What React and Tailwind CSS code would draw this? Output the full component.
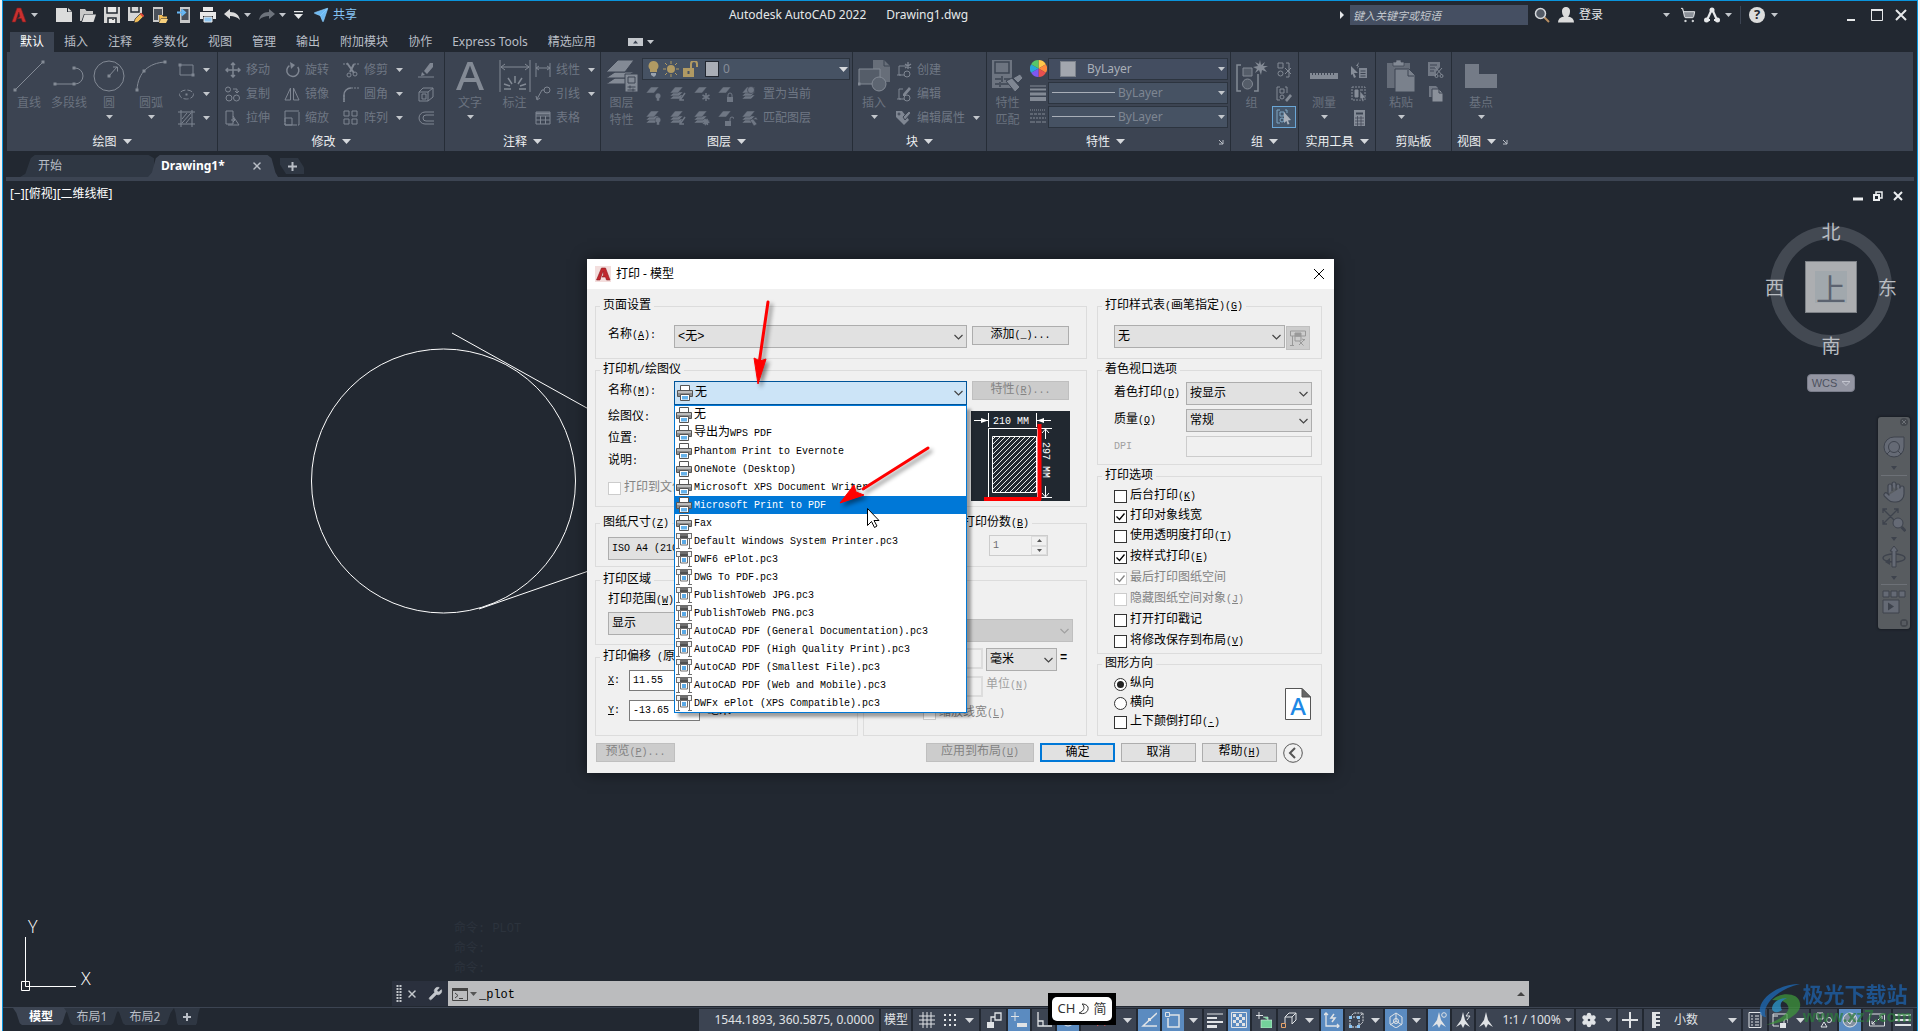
import { X, Wrench, Send, ShoppingCart, Settings, Hand } from "lucide-react";

const RIBBON_TABS = ["默认", "插入", "注释", "参数化", "视图", "管理", "输出", "附加模块", "协作", "Express Tools", "精选应用"];

const PRINTERS = [
  { name: "无" },
  { name: "导出为WPS PDF" },
  { name: "Phantom Print to Evernote" },
  { name: "OneNote (Desktop)" },
  { name: "Microsoft XPS Document Writer" },
  { name: "Microsoft Print to PDF", active: true },
  { name: "Fax" },
  { name: "Default Windows System Printer.pc3", plotter: true },
  { name: "DWF6 ePlot.pc3", plotter: true },
  { name: "DWG To PDF.pc3", plotter: true },
  { name: "PublishToWeb JPG.pc3", plotter: true },
  { name: "PublishToWeb PNG.pc3", plotter: true },
  { name: "AutoCAD PDF (General Documentation).pc3", plotter: true },
  { name: "AutoCAD PDF (High Quality Print).pc3", plotter: true },
  { name: "AutoCAD PDF (Smallest File).pc3", plotter: true },
  { name: "AutoCAD PDF (Web and Mobile).pc3", plotter: true },
  { name: "DWFx ePlot (XPS Compatible).pc3", plotter: true },
];

/* ---------- helpers ---------- */

function Svg({ w = 16, h = w, box, className = "", children }) {
  return (
    <svg
      width={w}
      height={h}
      viewBox={box || `0 0 ${w} ${h}`}
      fill="none"
      stroke="currentColor"
      className={`shrink-0 ${className}`}
      aria-hidden="true"
    >
      {children}
    </svg>
  );
}

function Caret({ className = "" }) {
  return (
    <Svg w={7} h={4} className={`text-[#c3c7cc] ${className}`}>
      <path d="M0 0h7L3.5 4z" fill="currentColor" stroke="none" />
    </Svg>
  );
}

function BigCaret({ className = "" }) {
  return (
    <Svg w={9} h={5} className={`text-[#d5d8dc] ${className}`}>
      <path d="M0 0h9L4.500 5z" fill="currentColor" stroke="none" />
    </Svg>
  );
}

// Latin runs are set smaller than the Chinese ones; "&X" underlines an access key
function T({ children }) {
  const parts = children.split(/(&.|[\u3000-\u9fff]+)/).filter(Boolean);
  return (
    <span className="whitespace-pre">
      {parts.map((p, i) => {
        if (p[0] === "&") return <u key={i} className="text-[10px] underline-offset-1">{p[1]}</u>;
        if (/[\u3000-\u9fff]/.test(p)) return <span key={i}>{p}</span>;
        return <span key={i} className="text-[10px]">{p}</span>;
      })}
    </span>
  );
}

/* ---------- title bar ---------- */

function TitleBar() {
  return (
    <header className="flex h-[31px] items-center pr-[10px] pb-[3px] pl-[8px] text-[12px] text-[#e6e8ea]">
      <button className="flex items-center gap-1" aria-label="应用程序菜单">
        <Svg w={16}>
          <path d="M1 15L6 1h4l5 14h-3.500l-1.200-3.500H6.500L9 9.500 7.800 5 4.500 15z" fill="#c9302f" stroke="#7d1c1f" strokeWidth=".6" />
        </Svg>
        <Caret />
      </button>

      <div className="ml-[18px] flex items-center gap-2">
        <button aria-label="新建"><Svg w={16}><path d="M0 1h11v4h5v10H0zM12 1l4 3.500h-4z" fill="#dcdcdc" stroke="none" /></Svg></button>
        <button aria-label="打开"><Svg w={16}><path d="M0 2h5l1.500 2H13v3H4l-2.500 7H0z" fill="#c9c9c9" stroke="none" /><path d="M4.500 7.500H16L13.500 15H2z" fill="#dcdcdc" stroke="none" /></Svg></button>
        <button aria-label="保存"><Svg w={16}><path d="M0 0h16v16H0z" fill="#d6d6d6" stroke="none" /><path d="M3 0v6h10V0M4 16v-5h8v5" stroke="#222831" strokeWidth="1.500" fill="#e9e9e9" /><path d="M8 12.500h2" stroke="#555" /></Svg></button>
        <button aria-label="另存为"><Svg w={16}><path d="M0 0h14v9l-5 5H0z" fill="#d6d6d6" stroke="none" /><path d="M3 0v5h8V0" stroke="#222831" strokeWidth="1.500" /><path d="M7 12l6-6 3 3-6 6-4 1z" fill="#f2bd58" stroke="#222831" strokeWidth=".7" /><path d="M12.500 6.500l3 3" stroke="#e04b3c" strokeWidth="2" /></Svg></button>
        <button aria-label="从移动设备打开"><Svg w={16}><path d="M1 0h10v8H7v7H1z" fill="#c9c9c9" stroke="none" /><path d="M2 2h8v6H6v5H2z" fill="#4a505a" stroke="none" /><path d="M7 8h3l1 1.500h4v2H9L7.500 15z" fill="#f2bd58" stroke="none" /><path d="M9 12h7l-2 4H7z" fill="#f7d07e" stroke="none" /></Svg></button>
        <button aria-label="保存到移动设备"><Svg w={16}><path d="M4 0h10v16H4z" fill="#c9c9c9" stroke="none" /><path d="M5.500 2h7v11h-7z" fill="#4a505a" stroke="none" /><path d="M1 5.500h7M5.500 2.500l3.500 3-3.500 3" stroke="#68b8f5" strokeWidth="2" /></Svg></button>
        <button aria-label="打印"><Svg w={16}><path d="M3 0h10v4H3zM0 5h16v7h-3V9H3v3H0z" fill="#e8e8e8" stroke="none" /><path d="M4 10h8v5H4z" fill="#8fc7f3" stroke="#e8e8e8" /></Svg></button>
        <button aria-label="放弃"><Svg w={16}><path d="M0 7l6-5v3c6 0 9 3 10 8-3-3-6-4-10-4v3z" fill="#dcdcdc" stroke="none" /></Svg></button>
        <Caret className="-ml-1" />
        <button aria-label="重做"><Svg w={16}><path d="M16 7l-6-5v3C4 5 1 8 0 13c3-3 6-4 10-4v3z" fill="#6d737c" stroke="none" /></Svg></button>
        <Caret className="-ml-1" />
        <button aria-label="自定义"><Svg w={9} h={8}><path d="M0 .5h9" strokeWidth="1.500" /><path d="M0 3h9L4.500 8z" fill="currentColor" stroke="none" /></Svg></button>
        <button className="flex items-center gap-1 pl-[2px] text-[#86c4f4]">
          <Send size={16} fill="#6db9f2" strokeWidth={1} className="text-[#8fd0ff]" />
          共享
        </button>
      </div>

      <p className="flex flex-1 justify-center gap-[20px] whitespace-nowrap">
        <span>Autodesk AutoCAD 2022</span>
        <span>Drawing1.dwg</span>
      </p>

      <div className="flex items-center">
        <Svg w={4} h={8} className="mr-[6px]"><path d="M0 0v8l4-4z" fill="currentColor" stroke="none" /></Svg>
        <input
          aria-label="搜索"
          placeholder="键入关键字或短语"
          className="h-5 w-[178px] bg-[#454f62] px-[3px] text-[11px] italic outline-none placeholder:text-[#c3c7cd]"
        />
        <button className="ml-[6px]" aria-label="查找"><Svg w={16}><path d="M10 10l5 5" stroke="#b98f62" strokeWidth="2" /><circle cx="6.500" cy="6.500" r="5" fill="#545b66" stroke="#d5d8dc" strokeWidth="1.500" /></Svg></button>
        <button className="ml-2 flex items-center gap-[5px]">
          <Svg w={16}><path d="M8 0a4 4 0 014 4.500C12 7 11 9 10 9.500c4 .5 6 2.500 6 6H0c0-3.500 2-5.500 6-6C5 9 4 7 4 4.500A4 4 0 018 0z" fill="#dcdcdc" stroke="none" /></Svg>
          登录
        </button>
        <Caret className="ml-[60px]" />
        <button className="ml-[10px]" aria-label="购物车"><ShoppingCart size={16} strokeWidth={1.500} fill="#8b9098" /></button>
        <button className="ml-2 flex items-center gap-[5px]" aria-label="Autodesk App Store">
          <Svg w={16}><path d="M8 2L3 13M8 2l5 11M3 13h3M10 13h3" strokeWidth="2.200" /><circle cx="8" cy="3" r="2.500" fill="currentColor" stroke="none" /><circle cx="2.500" cy="13" r="2.500" fill="currentColor" stroke="none" /><circle cx="13.500" cy="13" r="2.500" fill="currentColor" stroke="none" /></Svg>
          <Caret />
        </button>
        <span className="mx-[8px] h-[18px] w-px bg-[#3c4452]" />
        <button className="flex items-center gap-[6px]" aria-label="帮助">
          <span className="flex size-4 items-center justify-center rounded-full bg-[#dcdcdc] text-[13px] font-bold text-[#222831]">?</span>
          <Caret />
        </button>
        <button className="ml-[69px]" aria-label="最小化"><Svg w={8} h={12}><path d="M0 11h8" strokeWidth="2" /></Svg></button>
        <button className="ml-[16px]" aria-label="最大化"><Svg w={12}><path d="M.5 1h11v10.500H.5z" /><path d="M0 1h12" strokeWidth="2" /></Svg></button>
        <button className="ml-[12px]" aria-label="关闭"><Svg w={12}><path d="M1 1l10 10M11 1L1 11" strokeWidth="2" /></Svg></button>
      </div>
    </header>
  );
}

function RibbonTabs() {
  return (
    <nav className="flex h-[20px] items-center pl-[7px] text-[12px] text-[#b9bec6]">
      {RIBBON_TABS.map((t, i) => (
        <button
          key={t}
          className={
            i === 0
              ? "h-full bg-[#3c4452] px-[10px] leading-[20px] text-white"
              : "h-full px-[10px] leading-[20px] whitespace-nowrap"
          }
        >
          {t}
        </button>
      ))}
      <button className="ml-[22px] flex items-center gap-1" aria-label="最小化功能区">
        <Svg w={15} h={8}><path d="M0 0h15v8H0z" fill="#c3c7cc" stroke="none" /><path d="M5 5.500h5L7.500 2.500z" fill="#3c4452" stroke="none" /></Svg>
        <Caret />
      </button>
    </nav>
  );
}

/* ---------- ribbon ---------- */

function Panel({ title, width, caret = true, launcher = false, children }) {
  return (
    <section className={`flex shrink-0 flex-col border-r border-[#262d37] ${width}`}>
      <div className="flex h-[80px] pt-[6px]">{children}</div>
      <div className="flex flex-1 items-center justify-center gap-[6px] text-[12px] leading-[18px] text-[#eceef0]">
        {launcher && <span className="flex-1" />}
        {title}
        {caret && <BigCaret />}
        {launcher && (
          <span className="flex flex-1 justify-end pr-[6px]">
            <Svg w={6}><path d="M1 1l4 4M5 1v4H1" stroke="#b9bec6" /></Svg>
          </span>
        )}
      </div>
    </section>
  );
}

function Big({ icon, label, label2, caret, width = "w-[41px]" }) {
  return (
    <button className={`flex shrink-0 flex-col items-center ${width}`}>
      <span className="flex h-[36px] items-center">{icon}</span>
      <span className="text-[12px] leading-[17px] whitespace-nowrap text-[#6a727f]">{label}</span>
      {label2 && <span className="text-[12px] leading-[17px] text-[#6a727f]">{label2}</span>}
      {caret && <Caret className="mt-1" />}
    </button>
  );
}

function Small({ icon, label, caret }) {
  return (
    <button className="flex h-6 items-center gap-[5px] text-[12px] whitespace-nowrap text-[#6f7784]">
      <span className="flex w-[17px] justify-center text-[#7f8692]">{icon}</span>
      {label}
      {caret && <Caret className="ml-[3px]" />}
    </button>
  );
}

const dot = (x, y) => <path key={`${x}-${y}`} d={`M${x - 1.5} ${y - 1.5}h3v3h-3z`} fill="currentColor" stroke="none" />;

const BIG = {
  line: <Svg w={32}><path d="M2 30L30 2" />{dot(2, 30)}{dot(30, 2)}</Svg>,
  pline: <Svg w={32}><path d="M2 24h20a8 8 0 000-16h-1" />{dot(2, 24)}{dot(21, 24)}{dot(21, 8)}</Svg>,
  circle: <Svg w={32}><circle cx="16" cy="16" r="15" /><path d="M16 16l8-9M20 7h4.500v4.500" />{dot(16, 16)}</Svg>,
  arc: <Svg w={32}><path d="M2 30C3 12 14 3 30 2" />{dot(2, 30)}{dot(9, 11)}{dot(30, 2)}</Svg>,
  text: <Svg w={28} h={30}><path d="M0 29L11.500 1h5L28 29h-4.800l-3-8H7.800l-3 8zM9.300 17h9.400L14 4.500z" fill="currentColor" stroke="none" /></Svg>,
  dim: <Svg w={32}><path d="M1 0v32M31 0v32M2 7h28M6 4L2 7l4 3M26 4l4 3-4 3" /><path d="M16 16v7M9 18l4 6M23 18l-4 6M5 24l6 2M27 24l-6 2M5 29h7M27 29h-7" strokeWidth="1.500" /></Svg>,
  layers: (
    <Svg w={32}>
      <g fill="currentColor" stroke="#3c4452" strokeWidth="1">
        <path d="M9 18h19l-9 6H0z" /><path d="M9 12h19l-9 6H0z" /><path d="M12 0h16l-9 12H0z" />
        <path d="M19 14h13v18H19z" />
      </g>
      <path d="M22 17h7v6h-7zM21.500 27h8M21.500 30h8M24 25.500v3M27 28.500v3" stroke="#3c4452" />
    </Svg>
  ),
  insert: <Svg w={32}><path d="M15 0h11l6 6v16H15z" fill="#676e79" stroke="none" /><path d="M26 0v6h6" stroke="#3c4452" /><path d="M1 9h21v15H1z" fill="#555d69" /><circle cx="21" cy="24" r="7" fill="#5d6571" />{dot(1, 24)}</Svg>,
  match: <Svg w={32}><path d="M0 0h20v28H0z" fill="#6d7480" stroke="none" /><path d="M3 2h14v11H3zM3 19h6M12 19h6M3 24h4M9 24h9M10 16v6M8 22v5" stroke="#3c4452" strokeWidth="1.500" /><path d="M14 21l6-3 8 9-5 5zM21 18l7-4 3 4-5 5z" fill="#7f8692" stroke="#3c4452" /></Svg>,
  group: <Svg w={32}><path d="M5 5H1v26h4M18 31h4V14" strokeWidth="1.500" /><path d="M7 8h9v8H7z" fill="#555d69" /><circle cx="11.500" cy="24" r="5" fill="#555d69" /><path d="M24 0l1 5 4-3-2 4h5l-4 2 3 4-5-2-1 5-2-5-4 3 2-4-4-2 5-1-3-4 4 2z" fill="currentColor" stroke="none" /></Svg>,
  ruler: <Svg w={30} h={32}><path d="M1 13h28v6H1z" fill="currentColor" stroke="none" /><path d="M3.500 12v3M6.500 12v3M9.500 12v3M12.500 12v3M15.500 12v3M18.500 12v3M21.500 12v3M24.500 12v3" stroke="#3c4452" /></Svg>,
  paste: <Svg w={28} h={32}><path d="M0 3h23v25H0z" fill="#666d79" stroke="none" /><path d="M6 2h3V0h5v2h3v4H6z" fill="currentColor" stroke="#3c4452" strokeWidth=".7" /><path d="M8 9h14l6 6v17H8z" fill="#7a818c" stroke="#3c4452" /><path d="M21 10v6h6" stroke="#3c4452" /></Svg>,
  base: <Svg w={34} h={32}><path d="M1 4h14v10h18v14H1z" fill="#747b87" stroke="none" /></Svg>,
};

const SM = {
  rect: <Svg w={17}><path d="M2 3h13v10H2z" />{dot(2, 3)}{dot(15, 13)}</Svg>,
  ellipse: <Svg w={17}><ellipse cx="8.500" cy="8.500" rx="7" ry="4.500" strokeDasharray="5 2" /><path d="M7.500 7.500h2v2h-2z" fill="currentColor" stroke="none" /></Svg>,
  hatch: <Svg w={17}><path d="M3 0v17M14 0v17M0 2h17M0 14h17" /><path d="M4 9l5-6M4 13l9-10M8 13l5-6" /></Svg>,
  move: <Svg><path d="M8 1v14M1 8h14M6 3l2-2 2 2M6 13l2 2 2-2M3 6L1 8l2 2M13 6l2 2-2 2" strokeWidth="1.500" /></Svg>,
  rotate: <Svg><path d="M9 3a6 6 0 106 6" strokeWidth="1.500" transform="rotate(-35 8 9)" /><path d="M6 0l5 3-4 4z" fill="currentColor" stroke="none" /></Svg>,
  trim: <Svg><path d="M0 2h5M11 2h5" strokeDasharray="2 1" /><path d="M4 1l7 10M11 2L7 10" strokeWidth="2" /><circle cx="6" cy="13" r="2" /><circle cx="12" cy="12" r="2" /></Svg>,
  erase: <Svg><path d="M12 1h3v4l-6 7-3-3zM4 10l3 3-4 1z" fill="currentColor" stroke="none" /><path d="M0 15h16" /></Svg>,
  copy: <Svg><circle cx="3" cy="3.500" r="2.500" /><circle cx="4" cy="12" r="3" /><circle cx="11.500" cy="12" r="3" /><path d="M8 3h4v4M10 5l2 2 2-2" /></Svg>,
  mirror: <Svg><path d="M6.500 2v12H1zM9.500 2v12H15z" /></Svg>,
  fillet: <Svg><path d="M1 16V9a7 7 0 017-7" strokeWidth="1.500" /><path d="M8 2h8M1 9v7" strokeDasharray="2 1" /></Svg>,
  explode: <Svg><path d="M1 6h9v9H1zM1 6l4-4h10l-5 4M10 15l5-4V2" /><path d="M4 8h4v5H4z" /></Svg>,
  stretch: <Svg><path d="M1 1h7v13H1zM8 6l6 9H3M6 10h4M8 8l2 2-2 2" /></Svg>,
  scale: <Svg><path d="M1 1h14v14H1z" strokeDasharray="14 1" /><path d="M1 8h7v7H1z" /></Svg>,
  array: <Svg><path d="M1 1h5v5H1zM9 1h5v5H9zM1 9h5v5H1zM9 9h5v5H9z" /></Svg>,
  offset: <Svg><path d="M16 2H7a6 6 0 000 12h9M16 5H8a3 3 0 000 6h8" /></Svg>,
  linear: <Svg><path d="M1 1v14M15 1v14M1 6h14M4 4L1 6l3 2M12 4l3 2-3 2" /></Svg>,
  leader: <Svg><circle cx="12" cy="4" r="3" /><path d="M9 4H7L2 13M1 10l1 4 3-2" /></Svg>,
  table: <Svg><path d="M1 2h14v12H1zM1 6h14M1 10h14M5.500 6v8M10.500 6v8" /><path d="M1 3.500h14" strokeWidth="2" /></Svg>,
  create: <Svg><path d="M3 4h8M3 4v9h5M1 13h4" /><circle cx="11" cy="12" r="3" /><path d="M12 0v7M9 2l6 4M15 2L9 6" strokeWidth="1.300" /></Svg>,
  edit: <Svg><path d="M3 3h4M3 3v10h5M1 13h4" /><circle cx="11" cy="12" r="3" /><path d="M7 8l6-7 2 2-6 7H7z" fill="currentColor" stroke="none" /></Svg>,
  attr: <Svg><path d="M0 1h6l7 9-5 5L0 7z" fill="currentColor" stroke="none" /><path d="M7 7l6-6 2 2-6 7z" fill="currentColor" stroke="#3c4452" /><circle cx="3" cy="4" r="1" stroke="#3c4452" /></Svg>,
  ungroup: <Svg><path d="M2 1h5v5H2zM10 1h3v14h-3" /><circle cx="4.500" cy="11.500" r="2.500" /><path d="M9 6l6 6M15 6l-6 6" /></Svg>,
  gedit: <Svg><path d="M4 1H1v13h3M9 1h2v6M4 3h4v4H4z" /><circle cx="6" cy="11" r="2" /><path d="M9 14l5-6 2 2-5 6z" fill="currentColor" stroke="none" /></Svg>,
  gsel: <Svg><path d="M4 1H1v13h3M9 1h2v3M4 3h4v4H4z" stroke="#7fa6c4" /><circle cx="6" cy="11" r="2" stroke="#7fa6c4" /><path d="M8 3l7 8-3 .500 1.500 3.500-2 .5-1-3.500L8 14z" fill="#a9b0ba" stroke="none" /></Svg>,
  qsel: <Svg><path d="M8 6h8v10H8z" fill="#7f8692" stroke="none" /><path d="M9.500 9h5M9.500 11.500h5M9.500 14h5" stroke="#3c4452" /><path d="M0 4l7 7H3l2 4-2 1-1.500-4L0 13zM8 0L5 4h3L6 7" fill="currentColor" stroke="none" /></Svg>,
  selall: <Svg><path d="M1 1h13v13H1z" strokeDasharray="2 1" /><path d="M4 4h3v7H4zM9 4h3" fill="currentColor" /><path d="M9 5l6 7h-3l1 3-1.500.5L10 12l-1 2z" fill="currentColor" stroke="#3c4452" strokeWidth=".5" /></Svg>,
  calc: <Svg><path d="M3 0h11v16H3z" fill="currentColor" stroke="none" /><path d="M5 3.500h7" stroke="#3c4452" strokeWidth="2" /><path d="M4 8h9M4 11h9M4 14h9M6.500 6v10M10 6v10" stroke="#3c4452" strokeWidth=".7" /></Svg>,
  cut: <Svg><path d="M0 0h12v5l-4 5v4H0z" fill="#727985" stroke="none" /><path d="M2 3h7M2 6h6M2 9h4" stroke="#3c4452" /><path d="M7 5l7 8M14 6l-7 8" /><circle cx="8.500" cy="14" r="1.500" /><circle cx="13.500" cy="14" r="1.500" /></Svg>,
  clip: <Svg><path d="M1 0h7l2 2v9H1z" fill="#727985" stroke="none" /><path d="M4 3h7l4 4v9H4z" fill="#8b919b" stroke="#3c4452" /><path d="M11 3v4h4" stroke="#3c4452" /></Svg>,
};

// slanted sheet with a badge, shared by the layer tools
function LayerIcon({ stack, badge }) {
  return (
    <Svg>
      <g fill="currentColor" stroke="#3c4452" strokeWidth=".5">
        {stack && <path d="M4 9h9l-4 4H0z" />}
        {stack && <path d="M4 6h9l-4 4H0z" />}
        <path d="M5 1h8L8 7H0z" />
      </g>
      {badge === "bulb" && <path d="M12 7a3 3 0 011.500 5.500V15h-3v-2.500A3 3 0 0112 7z" fill="currentColor" stroke="#3c4452" strokeWidth=".5" />}
      {badge === "arrow" && <path d="M15 7l-5 7M10 10v4h4" strokeWidth="1.500" />}
      {badge === "snow" && <path d="M12 7v8M8.500 9l7 4M15.500 9l-7 4" strokeWidth="1.500" />}
      {badge === "lock" && <><path d="M9 11h6v5H9z" fill="currentColor" stroke="none" /><path d="M10 11V9a2 2 0 014 0v2" /></>}
      {badge === "unlock" && <><path d="M7 11h6v5H7z" fill="currentColor" stroke="none" /><path d="M12 11V9a2 2 0 014 0" /></>}
      {badge === "ball" && <circle cx="9" cy="4" r="3.500" fill="currentColor" stroke="#3c4452" strokeWidth=".7" />}
      {badge === "sun" && <circle cx="12" cy="12" r="2.500" fill="currentColor" strokeDasharray="1 1" strokeWidth="2" />}
      {badge === "brush" && <path d="M8 10l3-1 4 5-3 2zM11 9l3-2 2 3z" fill="currentColor" stroke="#3c4452" strokeWidth=".5" />}
    </Svg>
  );
}

function ByLayerSelect({ label, first }) {
  return (
    <div className="relative">
      <select
        aria-label={label}
        className={
          first
            ? "block h-[22px] w-full appearance-none border border-[#2c343f] bg-[#434d60] pl-[38px] text-[12px] text-[#a9afb8] outline-none"
            : "block h-[22px] w-full appearance-none border border-[#2c343f] bg-[#465263] pl-[69px] text-[12px] text-[#7e8692] outline-none"
        }
      >
        <option>ByLayer</option>
      </select>
      {first ? (
        <span className="absolute top-[3px] left-[12px] size-4 border border-[#7c828b] bg-[#a3a7ae]" />
      ) : (
        <span className="absolute top-[10px] left-[4px] h-px w-[63px] bg-[#a9afb8]" />
      )}
      <Caret className="absolute top-[9px] right-[3px]" />
    </div>
  );
}

function Ribbon() {
  return (
    <div className="mr-[4px] ml-[4px] flex h-[99px] bg-[#3c4452] text-[#838a95]">
      <Panel title="绘图" width="w-[211px]">
        <div className="flex pl-[2px]">
          <Big icon={BIG.line} label="直线" width="w-10" />
          <Big icon={BIG.pline} label="多段线" width="w-10" />
          <Big icon={BIG.circle} label="圆" caret width="w-10" />
          <Big icon={BIG.arc} label="圆弧" caret width="w-11" />
        </div>
        <div className="pl-[5px]">
          <Small icon={SM.rect} caret />
          <Small icon={SM.ellipse} caret />
          <Small icon={SM.hatch} caret />
        </div>
      </Panel>

      <Panel title="修改" width="w-[227px]">
        <div className="ml-[6px] w-[59px] shrink-0">
          <Small icon={SM.move} label="移动" />
          <Small icon={SM.copy} label="复制" />
          <Small icon={SM.stretch} label="拉伸" />
        </div>
        <div className="w-[59px] shrink-0">
          <Small icon={SM.rotate} label="旋转" />
          <Small icon={SM.mirror} label="镜像" />
          <Small icon={SM.scale} label="缩放" />
        </div>
        <div className="w-[75px] shrink-0">
          <Small icon={SM.trim} label="修剪" caret />
          <Small icon={SM.fillet} label="圆角" caret />
          <Small icon={SM.array} label="阵列" caret />
        </div>
        <div>
          <Small icon={SM.erase} />
          <Small icon={SM.explode} />
          <Small icon={SM.offset} />
        </div>
      </Panel>

      <Panel title="注释" width="w-[156px]">
        <Big icon={BIG.text} label="文字" caret width="w-[50px]" />
        <Big icon={BIG.dim} label="标注" width="w-[39px]" />
        <div>
          <Small icon={SM.linear} label="线性" caret />
          <Small icon={SM.leader} label="引线" caret />
          <Small icon={SM.table} label="表格" />
        </div>
      </Panel>

      <Panel title="图层" width="w-[252px]">
        <Big icon={BIG.layers} label="图层" label2="特性" />
        <div className="flex-1 pr-[2px]">
          <div className="relative h-[24px]">
            <select aria-label="图层" className="block h-[22px] w-full appearance-none border border-[#2c343f] bg-[#465263] pl-[80px] text-[12px] text-[#868d98] outline-none">
              <option>0</option>
            </select>
            <span className="absolute top-[3px] left-[5px] flex items-center gap-[3px]">
              <Svg w={13} h={16}><path d="M6.500 0a5 5 0 013.500 8.500V11H3V8.500A5 5 0 016.500 0z" fill="#b09a63" stroke="none" /><path d="M4 12h5v2l-2 2-3-2z" fill="#9aa3ae" stroke="none" /></Svg>
              <Svg><circle cx="8" cy="8" r="4" fill="#b09a63" stroke="none" /><path d="M8 0v3M8 13v3M0 8h3M13 8h3M2 2l2 2M12 12l2 2M14 2l-2 2M4 12l-2 2" stroke="#b09a63" /></Svg>
              <Svg><path d="M1 7h11v9H1z" fill="#b09a63" stroke="none" /><path d="M9 7V3a3 3 0 016 0v3" stroke="#b09a63" strokeWidth="2" /><path d="M6.500 10v3" stroke="#465263" strokeWidth="2" /></Svg>
              <span className="ml-1 h-4 w-[14px] border border-[#222831] bg-[#a9aeb6]" />
            </span>
            <BigCaret className="absolute top-[9px] right-[2px]" />
          </div>
          <div className="flex h-6 items-center gap-2 pl-1 text-[12px] text-[#6f7784]">
            <LayerIcon badge="bulb" /><LayerIcon stack badge="arrow" /><LayerIcon badge="snow" /><LayerIcon badge="lock" />
            <button className="flex items-center gap-[5px]"><LayerIcon stack badge="ball" />置为当前</button>
          </div>
          <div className="flex h-6 items-center gap-2 pl-1 text-[12px] text-[#6f7784]">
            <LayerIcon stack badge="bulb" /><LayerIcon stack badge="arrow" /><LayerIcon stack badge="sun" /><LayerIcon badge="unlock" />
            <button className="flex items-center gap-[5px]"><LayerIcon stack badge="brush" />匹配图层</button>
          </div>
        </div>
      </Panel>

      <Panel title="块" width="w-[134px]">
        <Big icon={BIG.insert} label="插入" caret width="w-[42px]" />
        <div>
          <Small icon={SM.create} label="创建" />
          <Small icon={SM.edit} label="编辑" />
          <Small icon={SM.attr} label="编辑属性" caret />
        </div>
      </Panel>

      <Panel title="特性" width="w-[244px]" launcher>
        <Big icon={BIG.match} label="特性" label2="匹配" />
        <div className="flex w-[20px] shrink-0 flex-col items-center gap-2">
          <Svg w={17} className="mt-[2px]">
            <g stroke="none">
              <path d="M8.500 8.500V0A8.500 8.500 0 0115.900 4.200z" fill="#ffc84a" /><path d="M8.500 8.500l7.400-4.300a8.500 8.500 0 010 8.600z" fill="#ff8a3d" />
              <path d="M8.500 8.500l7.400 4.300A8.500 8.500 0 018.500 17z" fill="#e8504f" /><path d="M8.500 8.500V17a8.500 8.500 0 01-7.400-4.200z" fill="#7e58f0" />
              <path d="M8.500 8.500l-7.400 4.300a8.500 8.500 0 010-8.600z" fill="#28a7dc" /><path d="M8.500 8.500L1.100 4.200A8.500 8.500 0 018.500 0z" fill="#57c76a" />
            </g>
          </Svg>
          <Svg><path d="M0 1h16" /><path d="M0 4.500h16" strokeWidth="2" /><path d="M0 9h16" strokeWidth="3" /><path d="M0 14h16" strokeWidth="4" /></Svg>
          <Svg><path d="M0 1h16" strokeDasharray="1 1" /><path d="M0 5h16" strokeDasharray="3 1" /><path d="M0 9h16" strokeDasharray="2 1" /><path d="M0 13h16" strokeDasharray="5 1" /></Svg>
        </div>
        <div className="flex flex-1 flex-col gap-[2px] pr-[2px]">
          <ByLayerSelect label="对象颜色" first />
          <ByLayerSelect label="线宽" />
          <ByLayerSelect label="线型" />
        </div>
      </Panel>

      <Panel title="组" width="w-[68px]">
        <Big icon={BIG.group} label="组" />
        <div>
          <div className="flex h-6 w-6 items-center justify-center">{SM.ungroup}</div>
          <div className="flex h-6 w-6 items-center justify-center">{SM.gedit}</div>
          <button className="flex h-[22px] w-6 items-center justify-center border border-[#6aa6d6] bg-[#44566b]" aria-label="启用组选择">{SM.gsel}</button>
        </div>
      </Panel>

      <Panel title="实用工具" width="w-[77px]">
        <Big icon={BIG.ruler} label="测量" caret width="w-[50px]" />
        <div className="pl-[2px] text-[#868d98]">
          <div className="flex h-6 items-center">{SM.qsel}</div>
          <div className="flex h-6 items-center">{SM.selall}</div>
          <div className="flex h-6 items-center">{SM.calc}</div>
        </div>
      </Panel>

      <Panel title="剪贴板" width="w-[76px]" caret={false}>
        <Big icon={BIG.paste} label="粘贴" caret width="w-[50px]" />
        <div className="pl-[2px]">
          <div className="flex h-6 items-center">{SM.cut}</div>
          <div className="flex h-6 items-center">{SM.clip}</div>
        </div>
      </Panel>

      <section className="flex flex-col">
        <div className="flex h-[80px] pt-[6px] pl-[4px]">
          <Big icon={BIG.base} label="基点" caret width="w-[50px]" />
        </div>
        <div className="flex flex-1 items-center gap-[6px] pl-[5px] text-[12px] leading-[18px] text-[#eceef0]">
          视图
          <BigCaret />
          <Svg w={6}><path d="M1 1l4 4M5 1v4H1" stroke="#b9bec6" /></Svg>
        </div>
      </section>
    </div>
  );
}

function FileTabs() {
  return (
    <div className="mr-[3px] ml-[3px] flex h-[30px] items-end border-b-4 border-[#3c4452] text-[12px]">
      <button className="ml-[14px] flex h-[22px] w-[134px] items-center bg-[#2f3743] pl-[18px] text-[#b9bec6] [clip-path:polygon(0_100%,4%_85%,8%_15%,11%_0,96%_0,100%_15%,100%_100%)]">
        开始
      </button>
      <div className="-ml-[6px] flex h-[22px] w-[130px] items-center justify-between bg-[#3c4452] pr-[15px] pl-[13px] text-white [clip-path:polygon(0_100%,3%_80%,6%_15%,9%_0,92%_0,95%_15%,98%_80%,100%_100%)]">
        <button className="font-bold">Drawing1*</button>
        <button aria-label="关闭图形" className="text-[#b9bec6]"><X size={12} strokeWidth={3} /></button>
      </div>
      <button aria-label="新图形" className="mb-[3px] ml-[2px] flex h-[16px] w-[24px] items-center justify-center bg-[#2f3743] text-[#b9bec6] [clip-path:polygon(0_0,75%_0,100%_60%,100%_100%,25%_100%,0_40%)]">
        <Svg w={9}><path d="M4.500 0v9M0 4.500h9" strokeWidth="2" /></Svg>
      </button>
    </div>
  );
}

/* ---------- plot dialog ---------- */

function PrinterIcon() {
  return (
    <Svg>
      <path d="M3.500.5h9V6h-9z" fill="#fff" stroke="#555" />
      <path d="M.5 5.500h15v6H.5z" fill="#bdbdbd" stroke="#555" />
      <path d="M1 8h14v3H1z" fill="#8c8c8c" stroke="none" />
      <path d="M3.500 9.500h9v6h-9z" fill="#fff" stroke="#555" />
      <path d="M5 11h6v3.500H5z" fill="#66b2ea" stroke="none" />
    </Svg>
  );
}

function PlotterIcon() {
  return (
    <Svg>
      <path d="M0 0h16v6H0z" fill="#6e6e6e" stroke="none" />
      <path d="M1 1h3v4H1zM12 1h3v4h-3z" fill="#f2f2f2" stroke="none" />
      <path d="M4 3h8v3H4z" fill="#505050" stroke="none" />
      <path d="M2.500 6v9.500M13.500 6v9.500M0 15.500h4M12 15.500h4" stroke="#6e6e6e" />
      <path d="M4.500 5.500h7V12h-7z" fill="#fff" stroke="#6e6e6e" />
      <path d="M6 7h4v4H6z" fill="#5aa9e6" stroke="none" />
    </Svg>
  );
}

function Chevron({ className = "" }) {
  return (
    <Svg w={9} h={6} className={`pointer-events-none absolute top-[9px] right-[4px] ${className}`}>
      <path d="M.5 1l4 4 4-4" strokeWidth="1.200" />
    </Svg>
  );
}

function Group({ title, className = "", children }) {
  return (
    <fieldset className={`min-w-0 border border-[#dcdcdc] ${className}`}>
      <legend className="ml-[4px] h-4 px-[3px] leading-4"><T>{title}</T></legend>
      {children}
    </fieldset>
  );
}

function Select({ id, label, value, disabled, className = "", small }) {
  return (
    <div className={`relative ${className}`}>
      <select
        id={id}
        aria-label={label}
        disabled={disabled}
        className={`block h-[23px] w-full appearance-none border pl-[3px] outline-none ${small ? "text-[10px]" : "text-[12px]"} ${
          disabled ? "border-[#bfbfbf] bg-[#cccccc]" : "border-[#adadad] bg-[#e1e1e1]"
        }`}
      >
        <option>{value}</option>
      </select>
      <Chevron className={disabled ? "text-[#a0a0a0]" : "text-[#444]"} />
    </div>
  );
}

function Tick({ label, checked = false, disabled = false }) {
  return (
    <label className={`flex h-4 items-center gap-[3px] leading-4 ${disabled ? "text-[#838383]" : ""}`}>
      <span className="relative flex">
        <input
          type="checkbox"
          defaultChecked={checked}
          disabled={disabled}
          className="peer size-[13px] appearance-none border border-[#333] bg-white disabled:border-[#ccc]"
        />
        <Svg w={13} className="pointer-events-none absolute top-0 left-0 hidden peer-checked:block"><path d="M2.500 6.500l3 3 5-6" strokeWidth="1.300" /></Svg>
      </span>
      <T>{label}</T>
    </label>
  );
}

function Radio({ label, checked = false }) {
  return (
    <label className="flex h-4 items-center gap-[3px] leading-4">
      <span className="relative flex">
        <input type="radio" name="orient" defaultChecked={checked} className="peer size-[13px] appearance-none rounded-full border border-[#333] bg-white" />
        <span className="pointer-events-none absolute top-[3px] left-[3px] hidden size-[7px] rounded-full bg-[#222] peer-checked:block" />
      </span>
      <T>{label}</T>
    </label>
  );
}

function DlgButton({ children, disabled, primary, className = "" }) {
  return (
    <button
      disabled={disabled}
      className={`flex h-[19px] items-center justify-center leading-4 ${
        primary
          ? "border-2 border-[#0078d7] bg-[#e1e1e1]"
          : disabled
            ? "border border-[#bfbfbf] bg-[#cccccc] text-[#838383]"
            : "border border-[#adadad] bg-[#e1e1e1]"
      } ${className}`}
    >
      <T>{children}</T>
    </button>
  );
}

function PaperPreview() {
  return (
    <svg width="99" height="90" viewBox="0 0 99 90" className="block bg-[#212830]" fill="none" stroke="#fff">
      <defs>
        <pattern id="hatch" width="5" height="5" patternUnits="userSpaceOnUse">
          <path d="M-1 6L6-1M-1 1l2-2M4 6l2-2" stroke="#fff" strokeWidth=".9" />
        </pattern>
      </defs>
      <path d="M17.500 2v14M65.500 2v14M3 9.500h14M66 9.500h14" />
      <path d="M10 7l7 2.500-7 2.500zM73 7l-7 2.500 7 2.500z" fill="#fff" stroke="none" />
      <path d="M17.500 17.500h49v69h-49z" />
      <path d="M21.500 25.500h44v56h-44z" fill="url(#hatch)" />
      <path d="M70 17.500h11M70 86.500h11M74.500 18v10M74.500 75v11M71 22l3.500-4 3.500 4M71 82l3.500 4 3.500-4" />
      <path d="M68.500 13v76M13 88h57" stroke="#f00" strokeWidth="4" />
      <text x="22" y="13" fontSize="10" fill="#fff" stroke="none" fontFamily="Liberation Mono">210 MM</text>
      <text transform="translate(72 31) rotate(90)" fontSize="10" fill="#fff" stroke="none" fontFamily="Liberation Mono">297 MM</text>
    </svg>
  );
}

function PrinterList() {
  return (
    <ul role="listbox" aria-label="打印机" className="absolute top-full left-0 z-10 w-full border border-[#0078d7] bg-white leading-4 shadow-[4px_4px_3px_rgba(0,0,0,0.35)]">
      {PRINTERS.map((p) => (
        <li
          key={p.name}
          role="option"
          aria-selected={!!p.active}
          className={`flex h-[18px] items-center gap-[2px] pl-px ${p.active ? "bg-[#0078d7] text-white" : ""}`}
        >
          {p.plotter ? <PlotterIcon /> : <PrinterIcon />}
          <T>{p.name}</T>
        </li>
      ))}
    </ul>
  );
}

function PlotDialog() {
  return (
    <div
      role="dialog"
      aria-label="打印 - 模型"
      className="absolute top-[78px] left-[584px] w-[747px] bg-[#f0f0f0] font-['Liberation_Mono','Noto_Sans_CJK_SC',monospace] text-[12px] text-black shadow-[0_0_14px_rgba(0,0,0,0.5)]"
    >
      <div className="flex h-[30px] items-center gap-[5px] bg-white pr-[9px] pl-2">
        <Svg w={16}>
          <path d="M0 0h16v16H0z" fill="#f3dedd" stroke="none" />
          <path d="M1.500 14L6.500 2h4l4.500 12h-3.500l-1-3H7L8.500 9 8 5 5 14z" fill="#c1272d" stroke="#8d1a20" strokeWidth=".6" />
        </Svg>
        <span className="flex-1 font-['Noto_Sans','Noto_Sans_CJK_SC',sans-serif]">打印 - 模型</span>
        <button aria-label="关闭"><Svg w={12}><path d="M1 1l10 10M11 1L1 11" stroke="#000" /></Svg></button>
      </div>

      <div className="flex gap-[10px] pt-[9px] pr-[12px] pl-2">
        <div className="flex-1">
          <Group title="页面设置" className="pb-[10px]">
            <div className="flex items-start pt-[11px] pl-[12px]">
              <label htmlFor="setup" className="w-[66px] leading-[20px]"><T>名称(&A):</T></label>
              <Select id="setup" value="<无>" className="w-[293px]" />
              <DlgButton className="mt-px ml-[5px] w-[97px]">添加(_)...</DlgButton>
            </div>
          </Group>

          <Group title="打印机/绘图仪" className="mt-[3px] pb-[5px]">
            <div className="flex pt-[3px] pl-[12px]">
              <div className="flex w-[66px] flex-col gap-[6px] leading-4 whitespace-nowrap">
                <label htmlFor="printer" className="h-[22px] leading-[20px]"><T>名称(&M):</T></label>
                <span className="h-4"><T>绘图仪:</T></span>
                <span className="h-4"><T>位置:</T></span>
                <span className="h-4"><T>说明:</T></span>
                <span className="pt-[5px]"><Tick label="打印到文件(&F)" disabled /></span>
              </div>
              <div className="relative h-[24px] w-[293px]">
                <select id="printer" className="block h-full w-full appearance-none border border-[#005499] bg-[#cce4f7] pl-[20px] text-[12px] outline-none">
                  <option>无</option>
                </select>
                <span className="pointer-events-none absolute top-1 left-[3px]"><PrinterIcon /></span>
                <Chevron className="text-[#444]" />
                <PrinterList />
              </div>
              <div className="ml-[4px] flex flex-col gap-[11px]">
                <DlgButton disabled className="ml-px w-[97px]">特性(&R)...</DlgButton>
                <PaperPreview />
              </div>
            </div>
          </Group>

          <div className="mt-[8px] flex gap-2">
            <Group title="图纸尺寸(&Z)" className="flex-1 pb-[6px]">
              <Select label="图纸尺寸" value="ISO A4 (210.00 x 297.00 毫米)" small className="mt-[6px] mr-3 ml-[12px]" />
            </Group>
            <Group title="打印份数(&B)" className="w-[132px] pb-[6px]">
              <div className="mt-[4px] ml-[33px] flex h-[21px] w-[59px] border border-[#ccc] text-[10px] text-[#6d6d6d]">
                <input aria-label="打印份数" defaultValue="1" disabled className="min-w-0 flex-1 pl-[3px]" />
                <div className="flex w-[16px] flex-col">
                  <button disabled aria-label="增加" className="flex flex-1 items-center justify-center border border-[#ddd]"><Svg w={5} h={3}><path d="M0 3h5L2.500 0z" fill="#555" stroke="none" /></Svg></button>
                  <button disabled aria-label="减少" className="flex flex-1 items-center justify-center border border-[#ddd]"><Svg w={5} h={3}><path d="M0 0h5L2.500 3z" fill="#555" stroke="none" /></Svg></button>
                </div>
              </div>
            </Group>
          </div>

          <div className="mt-[5px] flex gap-[5px]">
            <div className="w-[263px]">
              <Group title="打印区域" className="pb-[9px]">
                <div className="flex flex-col gap-1 pt-1 pr-3 pl-[12px]">
                  <label htmlFor="range" className="h-4 leading-4"><T>打印范围(&W):</T></label>
                  <Select id="range" value="显示" />
                </div>
              </Group>
              <Group title="打印偏移 (原点设置在可打印区域)" className="mt-[4px] pb-[14px]">
                <div className="flex flex-col gap-[9px] pt-[5px] pl-[12px] leading-4">
                  {[["&X:", "11.55", "ox"], ["&Y:", "-13.65", "oy"]].map(([l, v, id]) => (
                    <div key={id} className="flex h-[21px] items-center">
                      <label htmlFor={id} className="w-[21px]"><T>{l}</T></label>
                      <input id={id} defaultValue={v} className="h-[21px] w-[71px] border border-[#7a7a7a] bg-white pl-[3px] text-[10px]" />
                      <span className="ml-[7px]">毫米</span>
                    </div>
                  ))}
                </div>
              </Group>
            </div>

            <Group title="打印比例" className="flex-1 pb-[13px]">
              <div className="flex flex-col pt-[31px] pl-[12px]">
                <Select label="比例" disabled value="" className="mr-[13px] ml-[50px]" />
                <div className="mt-[6px] flex h-[23px] items-start pl-[40px]">
                  <input aria-label="图纸单位数值" disabled className="h-[21px] w-[67px] border-2 border-[#ddd]" />
                  <Select label="图纸单位" value="毫米" className="ml-[3px] w-[71px]" />
                  <span className="ml-[3px] leading-[20px] font-bold">=</span>
                </div>
                <div className="mt-[5px] flex h-[21px] items-start pl-[40px] text-[#a0a0a0]">
                  <input aria-label="单位数值" disabled className="h-[21px] w-[67px] border-2 border-[#ddd]" />
                  <span className="ml-[3px] leading-[18px]"><T>单位(&N)</T></span>
                </div>
                <div className="mt-[8px] ml-[47px]"><Tick label="缩放线宽(&L)" disabled /></div>
              </div>
            </Group>
          </div>
        </div>

        <div className="w-[225px]">
          <Group title="打印样式表(画笔指定)(&G)" className="pb-[8px]">
            <div className="flex items-start pt-[11px] pl-[16px]">
              <Select label="打印样式表" value="无" className="w-[171px]" />
              <button disabled aria-label="编辑样式表" className="mt-px ml-px flex size-6 items-center justify-center border border-[#bfbfbf] bg-[#cccccc]">
                <Svg className="text-[#999]">
                  <path d="M.5 1h15v5H.5z" /><path d="M5 3h6v3H5z" fill="currentColor" />
                  <path d="M2.500 6v9.500M0 15.500h4M5 6h6v5H5zM9 15l6-6M12 9l3 1M13.500 15.500l-4-4" />
                </Svg>
              </button>
            </div>
          </Group>

          <Group title="着色视口选项" className="mt-[3px] pb-[7px]">
            <div className="grid grid-cols-[72px_126px] grid-rows-[23px_23px_21px] gap-y-[4px] pt-[4px] pl-[16px]">
              <label htmlFor="shade" className="leading-[23px]"><T>着色打印(&D)</T></label>
              <Select id="shade" value="按显示" />
              <label htmlFor="quality" className="leading-[23px]"><T>质量(&Q)</T></label>
              <Select id="quality" value="常规" />
              <label htmlFor="dpi" className="leading-[20px] text-[#a0a0a0]"><T>DPI</T></label>
              <input id="dpi" disabled className="h-[21px] border border-[#ccc]" />
            </div>
          </Group>

          <Group title="打印选项" className="mt-[3px] pb-[4px]">
            <div className="flex flex-col gap-[5px] pt-[4px] pl-[16px]">
              <div className="flex flex-col gap-1">
                <Tick label="后台打印(&K)" />
                <Tick label="打印对象线宽" checked />
                <Tick label="使用透明度打印(&T)" />
              </div>
              <Tick label="按样式打印(&E)" checked />
              <Tick label="最后打印图纸空间" checked disabled />
              <Tick label="隐藏图纸空间对象(&J)" disabled />
              <Tick label="打开打印戳记" />
              <Tick label="将修改保存到布局(&V)" />
            </div>
          </Group>

          <Group title="图形方向" className="mt-[2px] pb-[5px]">
            <div className="flex justify-between pt-[4px] pr-[10px] pl-[16px]">
              <div className="flex flex-col gap-[3px]">
                <Radio label="纵向" checked />
                <Radio label="横向" />
                <Tick label="上下颠倒打印(&-)" />
              </div>
              <span className="relative mt-[12px] flex h-[32px] w-[26px]">
                <Svg w={26} h={32}><path d="M.5.5H17L25.500 9v22.500H.5z" fill="#fff" stroke="#555" /><path d="M17 .5V9h8.500z" fill="#666" stroke="#555" /></Svg>
                <span className="absolute inset-x-0 top-[6px] text-center font-['Noto_Sans',sans-serif] text-[24px] leading-[24px] font-medium text-[#1e88e5]">A</span>
              </span>
            </div>
          </Group>
        </div>
      </div>

      <div className="flex h-[37px] items-start gap-[6px] pt-[7px] pr-[31px] pl-[9px]">
        <DlgButton disabled className="mr-auto w-[79px]">预览(&P)...</DlgButton>
        <DlgButton disabled className="w-[108px]">应用到布局(&U)</DlgButton>
        <DlgButton primary className="w-[75px]">确定</DlgButton>
        <DlgButton className="w-[75px]">取消</DlgButton>
        <DlgButton className="w-[75px]">帮助(&H)</DlgButton>
        <button aria-label="更少选项"><Svg w={20}><circle cx="10" cy="10" r="9.300" stroke="#555" /><path d="M12 5l-5 5 5 5" stroke="#555" strokeWidth="2" /></Svg></button>
      </div>

      {/* pointer and annotation arrows */}
      <svg viewBox="0 0 747 515" className="pointer-events-none absolute top-0 left-0 z-20 w-full">
        <g fill="#f00" stroke="#f00" className="drop-shadow-[3px_3px_2px_rgba(0,0,0,0.45)]">
          <path d="M181 43l-9 62" strokeWidth="3" strokeLinecap="round" />
          <path d="M171 125l-4-26 6 3 6-2z" />
          <path d="M341 189l-65 41" strokeWidth="3" strokeLinecap="round" />
          <path d="M253 244l14-18 2 7 8 3z" />
        </g>
        <path d="M280.500 249.500v17l4-4 3 6 2.500-1.500-3-5.500h5z" fill="#fff" stroke="#000" />
      </svg>
    </div>
  );
}

/* ---------- drawing area ---------- */

function ViewCube() {
  return (
    <div className="absolute top-[42px] right-[20px] flex w-[132px] flex-col items-center font-['Noto_Sans_CJK_SC',sans-serif] text-[19px] leading-5 text-[#b9bdc2]">
      <div className="relative flex h-[128px] w-[132px] items-center justify-center">
        <span className="absolute top-[3px] size-[122px] rounded-full border-[13px] border-[#434952]" />
        <span className="absolute top-[-2px]">北</span>
        <span className="absolute bottom-[-4px]">南</span>
        <span className="absolute left-0">西</span>
        <span className="absolute right-0">东</span>
        <span className="relative flex size-[52px] items-center justify-center border border-[#7d8186] bg-[#acaeb1]">
          <span className="flex size-8 items-center justify-center bg-[#a1a8ad] text-[30px] leading-8 text-[#5c6370]">上</span>
        </span>
      </div>
      <button className="mt-[23px] flex h-[18px] w-[48px] items-center justify-center gap-[5px] rounded-[4px] border border-[#7a7d8a] bg-[#9496a3] font-['Liberation_Sans',sans-serif] text-[11px] text-[#4e5260]">
        WCS
        <Svg w={8} h={5}><path d="M0 .5h8L4 4.500z" stroke="#c3c5cf" /></Svg>
      </button>
    </div>
  );
}

function NavBar() {
  const caret = <Svg w={6} h={4}><path d="M0 0h6L3 4z" fill="currentColor" stroke="none" /></Svg>;
  return (
    <div className="absolute top-[236px] right-[7px] flex h-[212px] w-[32px] flex-col items-center rounded-[3px] bg-[#585c60] text-[#3e434d] shadow-[0_0_2px_1px_#191e25]">
      <Svg w={8} className="mt-[1px] mr-[2px] self-end"><circle cx="4" cy="4" r="4" fill="#43474d" stroke="none" /><path d="M2 2l4 4M6 2L2 6" stroke="#6d7177" /></Svg>
      <Svg w={22} className="mt-[10px]"><path d="M11 1h10v10A10 10 0 1111 1z" fill="#656a75" /><circle cx="11" cy="11" r="5.500" /><path d="M7 15l-3 3M15 15l3 3" /></Svg>
      <span className="mt-[8px] flex h-1">{caret}</span>
      <span className="mt-[5px] h-px w-[26px] bg-[#6d7177]" />
      <Hand size={24} strokeWidth={1.200} fill="#656a75" className="mt-[4px]" />
      <Svg w={24} className="mt-[4px]"><path d="M1 1l15 15M16 1L1 16M1 5V1h4M12 1h4v4M1 12v4h4" strokeWidth="1.300" /><circle cx="16" cy="15" r="5" fill="#656a75" /><path d="M19.500 19l4 4" strokeWidth="3" /></Svg>
      <span className="mt-[5px] flex h-1">{caret}</span>
      <Svg w={24} className="mt-[4px]"><ellipse cx="12" cy="13" rx="11" ry="4" strokeWidth="1.300" /><path d="M10 22V6H8l4-5 4 5h-2v16z" fill="#656a75" /><path d="M8 13l-5 4 5 3z" fill="currentColor" stroke="none" /></Svg>
      <span className="mt-[7px] flex h-1">{caret}</span>
      <span className="mt-[4px] h-px w-[26px] bg-[#6d7177]" />
      <Svg w={24} className="mt-[5px]"><path d="M1 1h6v6H1zM9 1h6v6H9zM17 1h6v6h-6zM1 10h16v13H1z" fill="#656a75" /><path d="M6 12.500v8l6-4z" fill="currentColor" stroke="none" /></Svg>
      <Svg w={8} className="mt-auto mr-[2px] mb-[2px] self-end"><circle cx="4" cy="4" r="4" fill="#43474d" stroke="none" /><path d="M2 3h4M2 5h4" stroke="#6d7177" /></Svg>
    </div>
  );
}

function CommandLine() {
  return (
    <div className="absolute bottom-[1px] left-[389px] flex h-[25px] w-[1137px] items-stretch text-[12px]">
      <div className="flex w-[56px] items-center gap-[4px] bg-[#2a303d] pl-[4px] text-[#c3c7cc]">
        <Svg w={6} h={18}><path d="M1.500 0v18M4.500 0v18" strokeWidth="2" strokeDasharray="2 1" /></Svg>
        <X size={12} strokeWidth={3} />
        <Wrench size={15} fill="currentColor" strokeWidth={1} className="ml-[6px]" />
      </div>
      <div className="flex flex-1 items-center bg-[#bbbcbe] pr-[4px] pl-[4px] text-[#444]">
        <Svg><path d="M.5 2.500h15v12H.5z" /><path d="M0 3.500h16" strokeWidth="3" /><path d="M3 7l3 2.500L3 12M7 12.500h4" /></Svg>
        <Caret className="mx-[2px] [&_path]:fill-[#555]" />
        <input aria-label="命令行" defaultValue="_plot" className="h-full flex-1 pt-[2px] font-['Liberation_Mono',monospace] text-[12px] text-black outline-none" />
        <Svg w={8} h={4}><path d="M0 4h8L4 0z" fill="currentColor" stroke="none" /></Svg>
      </div>
    </div>
  );
}

function Canvas() {
  return (
    <main className="relative min-h-[826px] flex-1 overflow-hidden">
      <p className="pt-[4px] pl-[7px] text-[12px] leading-[18px] text-white">[−][俯视][二维线框]</p>
      <div className="absolute top-[10px] right-[14px] flex items-end gap-[10px] text-[#eceef0]">
        <button aria-label="最小化视口"><Svg w={10}><path d="M0 8h10" strokeWidth="3" /></Svg></button>
        <button aria-label="还原视口"><Svg w={10}><path d="M3 3V1h6v6H7" strokeWidth="1.500" /><path d="M1 4h5v5H1z" strokeWidth="2" /></Svg></button>
        <button aria-label="关闭视口"><Svg w={10}><path d="M1 1l8 8M9 1L1 9" strokeWidth="2" /></Svg></button>
      </div>

      <svg width="600" height="500" viewBox="0 0 600 500" className="absolute top-0 left-0" fill="none" stroke="#fff">
        <circle cx="440.500" cy="300" r="132" />
        <path d="M449 152L600 236M476 428l124-43" />
      </svg>

      <svg width="90" height="88" viewBox="0 -8 90 88" className="absolute bottom-[10px] left-[10px]" fill="none" stroke="#fff">
        <path d="M12.500 20v49.500H63M8.500 64.500h8v9h-8z" />
        <text x="15" y="16" fontSize="18" fontWeight="300" fill="#fff" stroke="none" fontFamily="Open Sans">Y</text>
        <text x="68" y="68" fontSize="18" fontWeight="300" fill="#fff" stroke="none" fontFamily="Open Sans">X</text>
      </svg>

      <div className="absolute bottom-[28px] left-[451px] font-['Liberation_Mono','Noto_Sans_CJK_SC',monospace] text-[12px] leading-[20px] text-[#2c333d]">
        <p>命令: PLOT</p>
        <p>命令:</p>
        <p>命令:</p>
      </div>

      <ViewCube />
      <NavBar />
      <CommandLine />
      <PlotDialog />
    </main>
  );
}

/* ---------- status bar ---------- */

function Cell({ width, on, children, label }) {
  return (
    <button
      aria-label={label}
      className={`flex h-full shrink-0 items-center justify-center gap-2 ${width} ${on ? "bg-[#5b8bc0]" : "bg-[#3c4452]"}`}
    >
      {children}
    </button>
  );
}

function Split({ width, on, label, children }) {
  return (
    <div className={`flex h-full shrink-0 bg-[#3c4452] ${width}`}>
      <button aria-label={label} className={`flex w-[22px] items-center justify-center ${on ? "bg-[#5b8bc0]" : ""}`}>{children}</button>
      <span className="flex flex-1 items-center justify-center"><BigCaret /></span>
    </div>
  );
}

const mark = "M8 0l2 8 5 7-5-3-2 4-2-4-5 3 5-7z";

function StatusBar() {
  const tab = "flex h-[17px] items-center justify-center [clip-path:polygon(0_0,100%_0,94%_30%,88%_90%,84%_100%,16%_100%,12%_90%,6%_30%)]";
  return (
    <footer className="flex h-6 items-start border-t border-[#3c4452] pr-1 text-[12px] text-[#e0e3e6]">
      <nav className="flex pl-[10px]">
        <button className={`${tab} w-[56px] bg-[#3c4452] font-bold text-white`}>模型</button>
        <button className={`${tab} -ml-[5px] w-[56px] bg-[#2f3743] text-[#b9bec6]`}>布局1</button>
        <button className={`${tab} -ml-1 w-[58px] bg-[#2f3743] text-[#b9bec6]`}>布局2</button>
        <button aria-label="新布局" className={`${tab} w-[26px] bg-[#2f3743] text-[#b9bec6]`}><Svg w={8}><path d="M4 0v8M0 4h8" strokeWidth="2" /></Svg></button>
      </nav>
      <div className="ml-auto flex h-[23px] gap-[2px] pt-px">
        <div className="flex w-[180px] items-center justify-end bg-[#3c4452] pr-[5px] whitespace-nowrap">1544.1893, 360.5875, 0.0000</div>
        <Cell width="w-[30px]">模型</Cell>
        <Cell width="w-[66px]" label="栅格">
          <Svg><path d="M4 0v16M8 0v16M12 0v16M0 4h16M0 8h16M0 12h16" /></Svg>
          <Svg w={14}><path d="M1 2h13M1 7h13M1 12h13" strokeWidth="2" strokeDasharray="2 3" /></Svg>
          <BigCaret />
        </Cell>
        <Cell width="w-[25px]" label="推断约束"><Svg><path d="M9 1h6v7H9zM9 5H5v5" strokeWidth="1.300" /><path d="M1 10h7v6H1z" fill="currentColor" stroke="none" /></Svg></Cell>
        <Cell width="w-[22px]" on label="动态输入"><Svg><path d="M4 0v9M0 4.500h8" /><path d="M6 11h10v4H6z" fill="currentColor" stroke="none" /></Svg></Cell>
        <Cell width="w-[23px]" label="正交"><Svg><path d="M2 0v14h14M2 9h5v5" strokeWidth="1.300" /></Svg></Cell>
        <Cell width="w-[22px]" on label="极轴"><Svg><circle cx="8" cy="8" r="6" /></Svg></Cell>
        <div className="flex w-[55px] items-center justify-end gap-3 bg-[#3c4452] pr-[4px]"><Svg className="text-[#d05050]"><path d="M2 14L14 4M6 2l4 12" /></Svg><BigCaret /></div>
        <Cell width="w-[22px]" on label="对象捕捉追踪"><Svg><path d="M16 1L2 14h14" strokeWidth="1.500" /><path d="M7 6h3v3H7z" fill="currentColor" stroke="none" /></Svg></Cell>
        <Split width="w-[40px]" on label="对象捕捉"><Svg><path d="M5 3h9v12H3V6" strokeWidth="1.500" /><path d="M.5.5h4v4h-4z" /></Svg></Split>
        <Cell width="w-[22px]" label="线宽"><Svg><path d="M0 2h16" /><path d="M0 6h10M0 10h16" strokeWidth="2" /><path d="M0 14.500h10" strokeWidth="3" /></Svg></Cell>
        <Cell width="w-[22px]" on label="透明度"><Svg><path d="M.5.5h15v15H.5z" /><path d="M2 3.500h12M2 9.500h12" strokeWidth="3" strokeDasharray="3 3" /><path d="M5 6.500h10M5 12.500h10" strokeWidth="3" strokeDasharray="3 3" /></Svg></Cell>
        <Cell width="w-[24px]" label="选择循环"><Svg><path d="M3 0v7M0 3.500h7" /><path d="M7 5h5v3M5 8h11v8H5z" fill="#74d29b" stroke="#d5f2e0" strokeWidth=".6" /></Svg></Cell>
        <Split width="w-[41px]" label="三维对象捕捉"><Svg><path d="M4 5l4-4h7v7l-4 4M4 5h7v7M4 5v6M11 5l4-4" /><path d="M.5 11.500h4v4h-4z" stroke="#e8a36a" /></Svg></Split>
        <Cell width="w-[22px]" on label="动态 UCS"><Svg><path d="M2 1v13h13M0 3l2-2 2 2M13 12l2 2-2 2" strokeWidth="1.300" /><path d="M10 2L7 6h4l-3 4" strokeWidth="1.500" /></Svg></Cell>
        <Split width="w-[38px]" label="选择过滤"><Svg><path d="M2 5h9v10H2zM2 5l4-4h9v9l-4 4M11 5l4-4" strokeDasharray="2 1" /><path d="M1 4h3v3H1zM9 4h3v3H9zM1 13h3v3H1zM9 13h3v3H9z" fill="#8cc6f5" stroke="none" /></Svg></Split>
        <Split width="w-[41px]" on label="小控件"><Svg><path d="M8 1l6 4v7l-6 4-6-4V5zM8 1v8M8 9l6 4M8 9l-6 4" /><circle cx="8" cy="9" r="2.500" /></Svg></Split>
        <Cell width="w-[22px]" on label="注释可见性"><Svg><path d={mark} fill="currentColor" stroke="none" /><circle cx="13" cy="3" r="2.300" /></Svg></Cell>
        <Cell width="w-[22px]" label="自动缩放"><Svg><path d={mark} fill="currentColor" stroke="none" /><path d="M14 0l-3 4h4l-3 4" /></Svg></Cell>
        <Cell width="w-[98px]">
          <Svg><path d={mark} fill="currentColor" stroke="none" /></Svg>
          <span className="whitespace-nowrap">1:1 / 100%</span>
          <Caret className="-ml-1" />
        </Cell>
        <Cell width="w-[40px]" label="切换工作空间"><Settings size={16} fill="currentColor" className="[&_circle]:fill-[#3c4452]" /><Caret /></Cell>
        <Cell width="w-[24px]" label="注释监视器"><Svg><path d="M8 0v16M0 8h16" strokeWidth="2" /></Svg></Cell>
        <div className="flex w-[97px] items-center justify-between bg-[#3c4452] pr-[4px] pl-2">
          <span className="flex items-center gap-[14px]"><Svg w={8} h={16}><path d="M0 0h8v2H4v2h4v2H4v2h4v2H4v2h4v2H4v2H0z" fill="currentColor" stroke="none" /></Svg>小数</span>
          <BigCaret />
        </div>
        <Cell width="w-[24px]" label="快捷特性"><Svg><path d="M2 .5h12v15H2z" /><path d="M4 4h2M8 4h4M4 7h2M8 7h4M4 10h2M8 10h4M4 13h2M8 13h4" /></Svg></Cell>
        <Split width="w-[40px]" label="锁定界面"><Svg><path d="M1 2h14v5M1 2v12h6M1 4h5" /><path d="M8 11h6v5H8z" fill="currentColor" stroke="none" /><path d="M12 11V9a2 2 0 014 0v2" /></Svg></Split>
        <Cell width="w-[26px]" label="隔离对象"><Svg><path d="M1 1h6v6H1zM8 10l3 5H5z" /><circle cx="13" cy="8" r="2.500" /></Svg></Cell>
        <Cell width="w-[22px]" on label="图形性能"><Svg><circle cx="8" cy="8" r="7" fill="#8290a0" /><path d="M5 9l3 3 5-8" /></Svg></Cell>
        <Cell width="w-[28px]" label="全屏显示"><Svg><path d="M.5 2h15v12H.5z" /><path d="M9 8l4-4M10 4h3v3M7 8l-4 4M3 9v3h3" /></Svg></Cell>
        <Cell width="w-[20px]" label="自定义"><Svg><path d="M0 3h16M0 8h16M0 13h16" strokeWidth="2" /></Svg></Cell>
      </div>
    </footer>
  );
}

function Watermark() {
  return (
    <div className="pointer-events-none absolute right-[5px] bottom-[5px] z-30 flex items-start opacity-70">
      <Svg w={44} h={44}>
        <path d="M42 2C22 2 4 14 2 26c-1 6 2 9 6 9C3 26 16 8 42 2z" fill="#1d6fc0" stroke="none" />
        <path d="M14 18c8-8 26-8 28 3 2 9-10 19-34 22 14-5 25-13 22-19-2-5-9-6-16-6z" fill="#3f9a3c" stroke="none" />
        <path d="M14 27c0-7 8-11 15-11-6 3-8 6-5 12-4 3-9 3-10-1z" fill="#2da0d8" stroke="none" />
      </Svg>
      <div className="leading-none font-bold">
        <p className="text-[21px] leading-[24px] text-[#1d66b4]">极光下载站</p>
        <p className="text-[16px] leading-[20px] text-[#2c7d3c]">www.xz7.com</p>
      </div>
    </div>
  );
}

export default function App() {
  return (
    <div className="flex min-h-screen bg-[#f2f2f2] px-[2px] font-['Noto_Sans','Noto_Sans_CJK_SC',sans-serif]">
      <div className="relative flex min-w-0 flex-1 flex-col border-x border-t border-[#0a94dc] bg-[#222831]">
        <TitleBar />
        <RibbonTabs />
        <Ribbon />
        <FileTabs />
        <Canvas />
        <StatusBar />
        <Watermark />
        <div className="absolute right-[801px] bottom-[6px] z-30 bg-black p-1">
          <div className="flex h-6 w-[60px] items-center justify-center gap-[3px] rounded-[5px] bg-white text-[13px] text-[#333]">
            CH
            <Svg w={12}><path d="M4 1c3 2 3 7-3 9 5 2 10-1 9-6-1-2-3-3-6-3z" stroke="#333" /></Svg>
            简
          </div>
        </div>
      </div>
    </div>
  );
}
